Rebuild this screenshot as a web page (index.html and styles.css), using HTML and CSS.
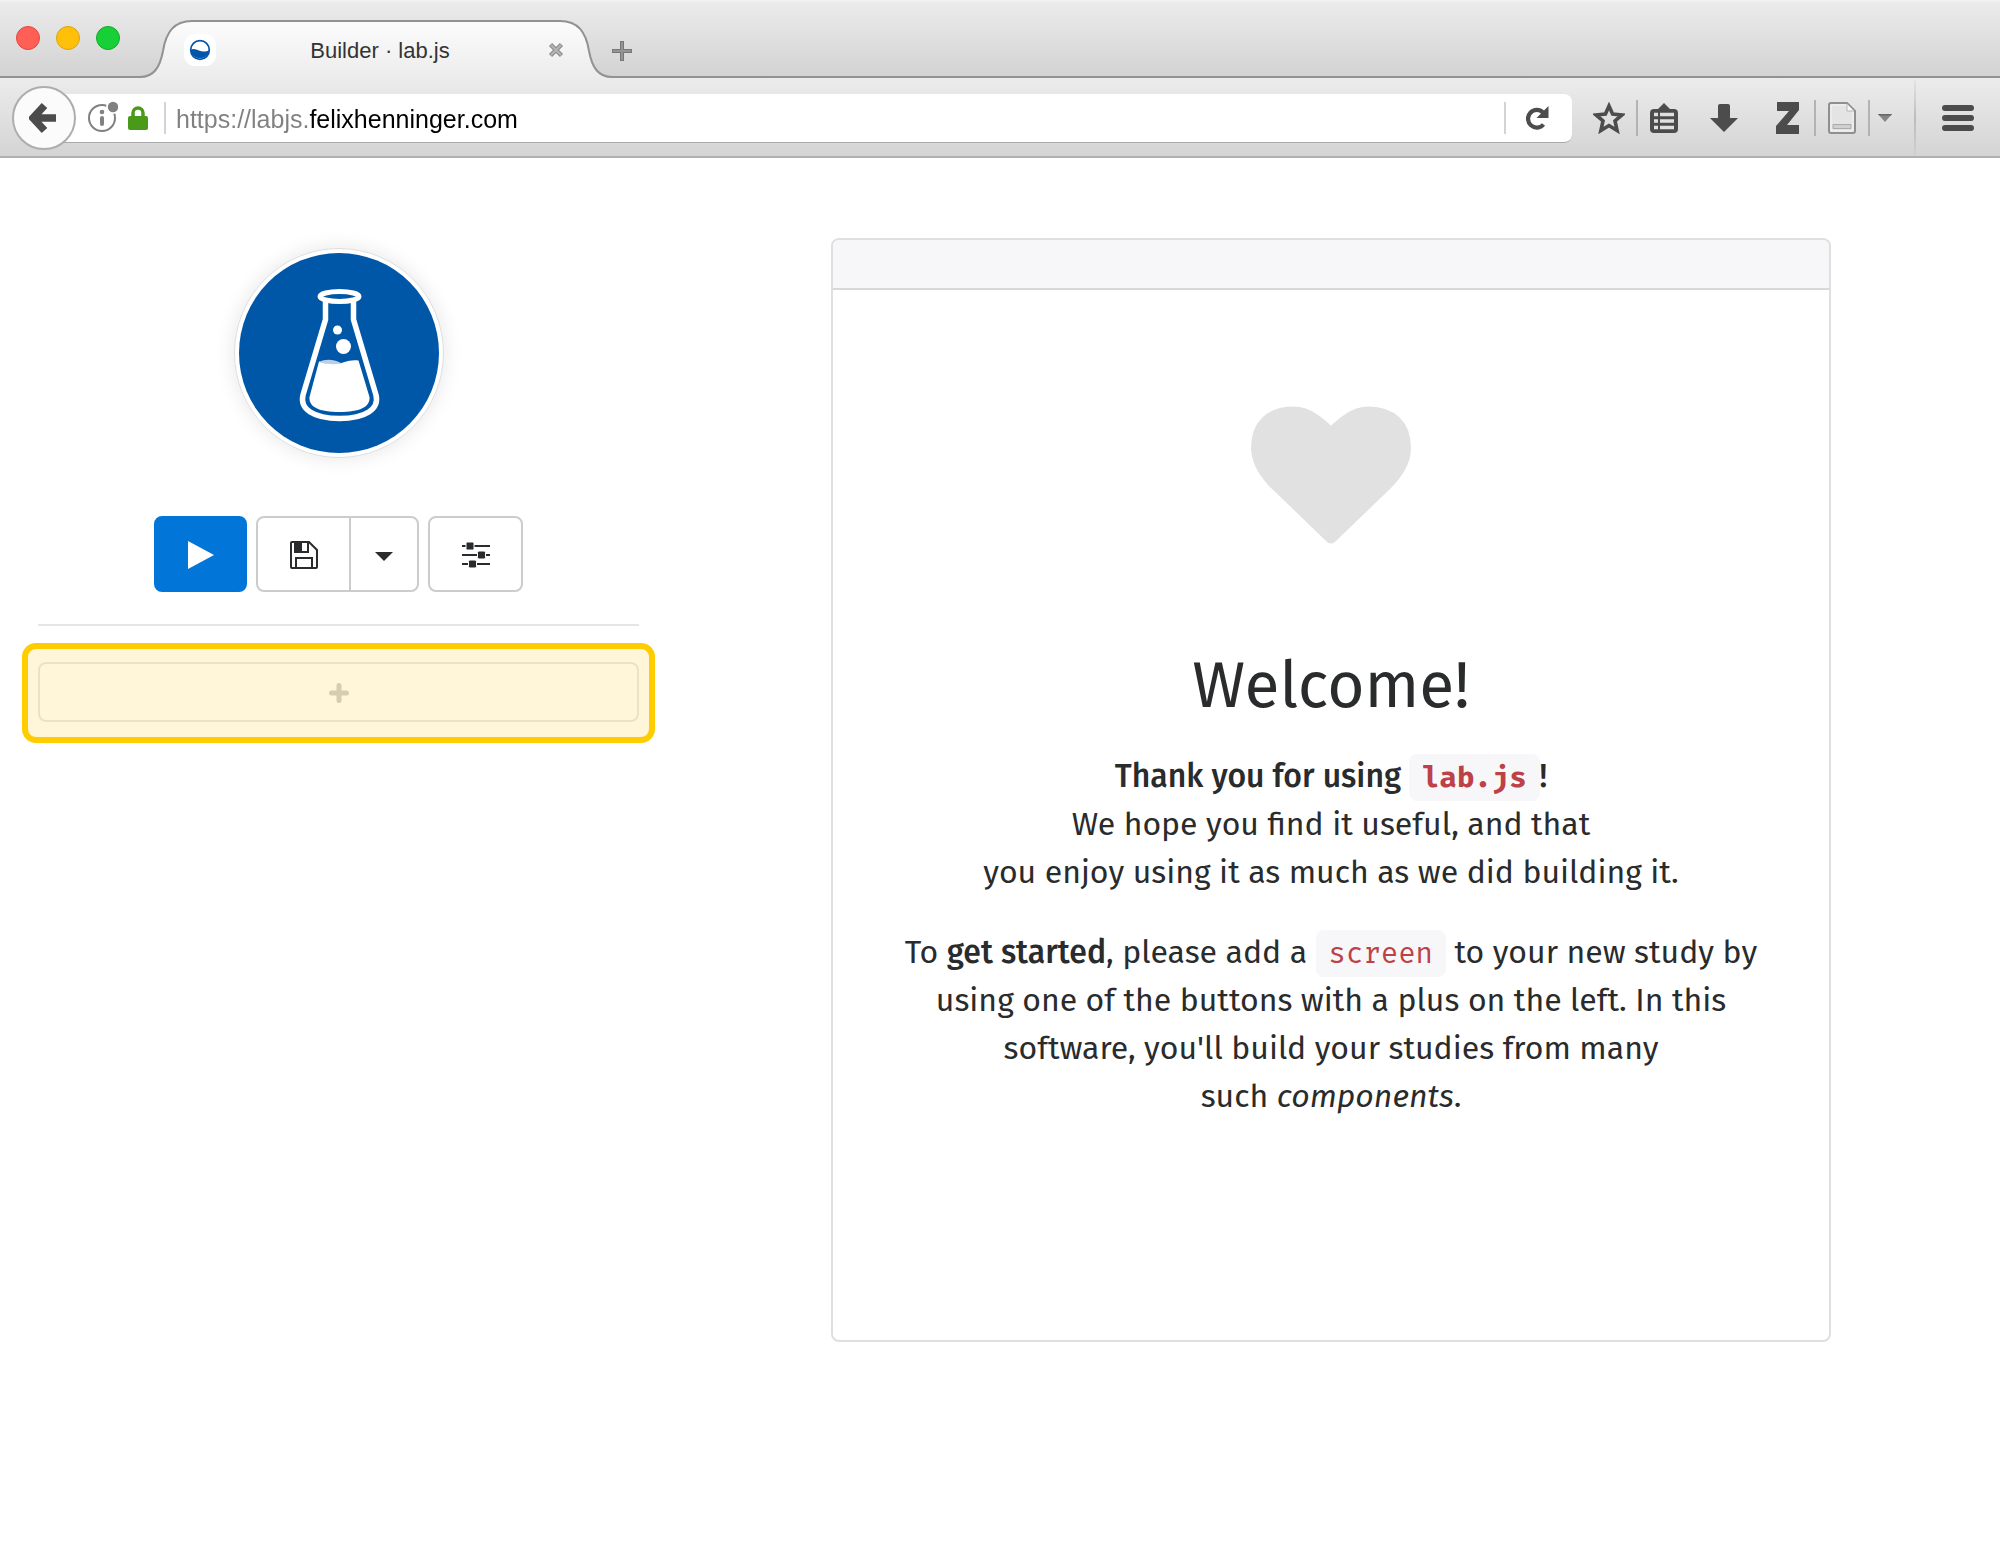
FILE: index.html
```html
<!DOCTYPE html>
<html lang="en">
<head>
<meta charset="utf-8">
<title>Builder · lab.js</title>
<link rel="stylesheet" href="styles.css">
</head>
<body>
<header class="browser">
  <div class="tabstrip">
    <div class="window-controls">
      <button class="light light-close" aria-label="Close window"></button>
      <button class="light light-minimize" aria-label="Minimize window"></button>
      <button class="light light-zoom" aria-label="Zoom window"></button>
    </div>
    <div class="tab">
      <svg class="tab-edge" width="52" height="58" viewBox="0 0 52 58" aria-hidden="true">
        <defs><linearGradient id="tabfill" x1="0" y1="0" x2="0" y2="1"><stop offset="0" stop-color="#fcfcfc"/><stop offset="1" stop-color="#ececec"/></linearGradient></defs>
        <path d="M0 57C14 57 20 47 23 31C26 12 34 1 52 1V58H0Z" fill="url(#tabfill)"/>
        <path d="M0 57C14 57 20 47 23 31C26 12 34 1 52 1" fill="none" stroke="#929292" stroke-width="2"/>
      </svg>
      <div class="tab-body">
        <svg class="favicon" width="32" height="32" viewBox="0 0 32 32" aria-hidden="true">
          <rect width="32" height="32" rx="11" fill="#fff"/>
          <circle cx="16" cy="16" r="9.300" fill="#fff" stroke="#0055a8" stroke-width="1.700"/>
          <path d="M6.500 16C9 14 12 15 15 16.500S22 18 25.500 16A9.600 9.600 0 0 1 6.500 16Z" fill="#0055a8"/>
        </svg>
        <span class="tab-title">Builder · lab.js</span>
        <button class="plain tab-close" aria-label="Close tab">
          <svg width="16" height="16" viewBox="0 0 16 16"><path d="M2.500 2.500l11 11M13.500 2.500l-11 11" stroke="#8e8e8e" stroke-width="4.500"/><path d="M3 3l10 10M13 3L3 13" stroke="#b5b5b5" stroke-width="2"/></svg>
        </button>
      </div>
      <svg class="tab-edge" width="52" height="58" viewBox="0 0 52 58" aria-hidden="true">
        <path d="M52 57C38 57 32 47 29 31C26 12 18 1 0 1V58H52Z" fill="url(#tabfill)"/>
        <path d="M52 57C38 57 32 47 29 31C26 12 18 1 0 1" fill="none" stroke="#929292" stroke-width="2"/>
      </svg>
    </div>
    <div class="tabstrip-rest">
      <button class="plain" aria-label="New tab">
        <svg width="20" height="20" viewBox="0 0 20 20"><path d="M10 0v20M0 10h20" stroke="#777" stroke-width="4"/><path d="M10 1v18M1 10h18" stroke="#949494" stroke-width="2"/></svg>
      </button>
    </div>
  </div>
  <div class="toolbar">
    <button class="back" aria-label="Back">
      <svg width="30" height="32" viewBox="0 0 30 32"><path d="M15.500 3.500L4 16l11.500 12.500M5 16h22" fill="none" stroke="#4c4c4c" stroke-width="7.500"/></svg>
    </button>
    <div class="urlbar">
      <svg class="info" width="30" height="32" viewBox="0 0 30 32" aria-hidden="true">
        <circle cx="14" cy="18" r="13" fill="none" stroke="#808080" stroke-width="2"/>
        <circle cx="25" cy="7" r="7" fill="#fff"/><circle cx="25" cy="7" r="5.200" fill="#808080"/>
        <circle cx="14" cy="12" r="2.300" fill="#808080"/><path d="M14 18v6" stroke="#808080" stroke-width="4" stroke-linecap="round"/>
      </svg>
      <svg class="lock" width="20" height="24" viewBox="0 0 20 24" aria-hidden="true">
        <path d="M5 12V7a5 5 0 0 1 10 0v5" fill="none" stroke="#489a18" stroke-width="3.500"/><rect y="10" width="20" height="14" rx="2" fill="#489a18"/>
      </svg>
      <span class="url-divider"></span>
      <input class="url" type="text" aria-label="Address" value="https://labjs.felixhenninger.com">
      <span class="url-divider"></span>
      <button class="plain reload" aria-label="Reload">
        <svg width="24" height="26" viewBox="0 0 24 26"><path d="M17 7.500A8.800 8.800 0 1 0 17.500 19.500" fill="none" stroke="#4c4c4c" stroke-width="4.200"/><path d="M22.500 1v12H10.500Z" fill="#4c4c4c"/></svg>
      </button>
    </div>
    <div class="tools">
      <button class="plain tool-star" aria-label="Bookmark">
        <svg width="32" height="32" viewBox="0 0 32 32"><path d="M16 4l3.600 8 9.400.9-7 6.100 2.100 9.500L16 23.500l-8.100 5L10 19l-7-6.100 9.400-.9Z" fill="none" stroke="#4c4c4c" stroke-width="3.600"/></svg>
      </button>
      <span class="tool-divider"></span>
      <button class="plain tool-list" aria-label="Bookmarks list">
        <svg width="28" height="30" viewBox="0 0 28 30"><path d="M14 0l6 6h4a4 4 0 0 1 4 4v16a4 4 0 0 1-4 4H4a4 4 0 0 1-4-4V10a4 4 0 0 1 4-4h4Z" fill="#4c4c4c"/><path d="M10 11.500h14M10 18h14M10 24.500h14" stroke="#e0e0e0" stroke-width="3.500"/><path d="M4 11.500h4M4 18h4M4 24.500h4" stroke="#e0e0e0" stroke-width="3.500"/></svg>
      </button>
      <button class="plain tool-download" aria-label="Downloads">
        <svg width="28" height="28" viewBox="0 0 28 28"><path d="M8 2a2 2 0 0 1 2-2h8a2 2 0 0 1 2 2v12h8L14 28 0 14h8Z" fill="#4c4c4c"/></svg>
      </button>
      <button class="plain tool-zotero" aria-label="Zotero">
        <svg width="24" height="32" viewBox="0 0 24 32"><path d="M1 0h22v8L11 23h12v9H0v-8L13 9H1Z" fill="#4c4c4c"/></svg>
      </button>
      <span class="tool-divider"></span>
      <button class="plain tool-page" aria-label="Save page">
        <svg width="28" height="32" viewBox="0 0 28 32"><path d="M3 1h16l8 8v20a2 2 0 0 1-2 2H3a2 2 0 0 1-2-2V3a2 2 0 0 1 2-2Z" fill="#e4e4e4" stroke="#8f8f8f" stroke-width="2"/><path d="M3 3h15.500l6.500 6.500V29H3Z" fill="none" stroke="#f4f4f4"/><path d="M19 2v7h7" fill="#f8f8f8" stroke="#b5b5b5"/><path d="M5 22.500h18v4H5Z" fill="#d0d0d0" stroke="#aaa"/></svg>
      </button>
      <span class="tool-divider"></span>
      <button class="plain tool-caret" aria-label="More save options">
        <svg width="14" height="8" viewBox="0 0 14 8"><path d="M0 0h14L7 8Z" fill="#858585"/><path d="M0 0h14l-1 1.500H1Z" fill="#666"/></svg>
      </button>
      <span class="menu-divider"></span>
      <button class="plain tool-menu" aria-label="Menu">
        <svg width="32" height="26" viewBox="0 0 32 26"><path d="M3 3h26M3 13h26M3 23h26" stroke="#4c4c4c" stroke-width="6" stroke-linecap="round"/></svg>
      </button>
    </div>
  </div>
</header>

<div class="page">
  <aside class="sidebar">
    <div class="logo">
      <svg width="200" height="200" viewBox="0 0 200 200" role="img" aria-label="lab.js">
        <circle cx="100" cy="100" r="100" fill="#0057a8"/>
        <g fill="none" stroke="#fff">
          <ellipse cx="100.500" cy="43.500" rx="19.500" ry="5" stroke-width="5"/>
          <path d="M86.500 48V66.500L64 142C60.500 156 74.500 165.500 100.500 165.500S140.500 156 137 142L114.500 66.500V48" stroke-width="5.500"/>
        </g>
        <circle cx="98.500" cy="77" r="4.500" fill="#fff"/><circle cx="104.500" cy="93.500" r="7.500" fill="#fff"/>
        <path d="M80 109C86 106 94 106 102 110L96 113Z" fill="#b8cfe6"/>
        <path d="M80 108.500C88 112 98 112 104 109.500C110 107.500 114 107 119.500 107.500L130.500 144C131.500 154 120.500 159 100.500 159S69.500 154 70.500 144Z" fill="#fff"/>
      </svg>
    </div>
    <div class="actions">
      <button class="btn btn-primary" aria-label="Run study">
        <svg width="26" height="28" viewBox="0 0 26 28"><path d="M0 0l26 14L0 28Z" fill="#fff"/></svg>
      </button>
      <div class="btn-group">
        <button class="btn" aria-label="Save">
          <svg width="28" height="28" viewBox="0 0 28 28"><path d="M1 2a1 1 0 0 1 1-1h17l8 8v17a1 1 0 0 1-1 1H2a1 1 0 0 1-1-1Z" fill="none" stroke="#292b2c" stroke-width="2"/><path d="M5 1v10h13V1M6 27V17h16v10" fill="none" stroke="#292b2c" stroke-width="2"/><path d="M5 1h7v10H5Z" fill="#292b2c"/></svg>
        </button>
        <button class="btn btn-caret" aria-label="More options">
          <svg width="18" height="9" viewBox="0 0 18 9"><path d="M0 0h18L9 9Z" fill="#292b2c"/></svg>
        </button>
      </div>
      <button class="btn" aria-label="Settings">
        <svg width="28" height="28" viewBox="0 0 28 28"><path d="M0 5h28M0 14h28M0 23h28" stroke="#292b2c" stroke-width="2"/><g fill="#292b2c" stroke="#fff" stroke-width="1"><rect x="4" y="1" width="8" height="8" rx="1.500"/><rect x="15.500" y="10" width="8" height="8" rx="1.500"/><rect x="6.500" y="19" width="8" height="8" rx="1.500"/></g></svg>
      </button>
    </div>
    <hr class="rule">
    <div class="highlight">
      <button class="add" aria-label="Add component">
        <svg width="20" height="20" viewBox="0 0 20 20"><path d="M10 2.500v15M2.500 10h15" stroke="#d6cdae" stroke-width="5" stroke-linecap="round"/></svg>
      </button>
    </div>
  </aside>
  <main class="content">
    <section class="card">
      <div class="card-header"></div>
      <div class="card-body">
        <svg class="heart" width="160" height="138" viewBox="0 128 1792 1536" aria-hidden="true"><path fill="#e1e1e1" d="M896 1664q-26 0-44-18l-624-602q-10-8-27.500-26T145 952.500 77 855 23.500 734 0 596q0-220 127-344t351-124q62 0 126.500 21.500t120 58T820 276t76 68q36-36 76-68t95.500-68.500 120-58T1314 128q224 0 351 124t127 344q0 221-229 450l-623 600q-18 18-44 18z"/></svg>
        <h1>Welcome!</h1>
        <p><strong>Thank you for using <code>lab.js</code>!</strong><br>We hope you find it useful, and that<br>you enjoy using it as much as we did building it.</p>
        <p>To <strong>get started</strong>, please add a <code>screen</code> to your new study by<br>using one of the buttons with a plus on the left. In this<br>software, you'll build your studies from many<br>such <em>components</em>.</p>
      </div>
    </section>
  </main>
</div>
</body>
</html>
```
FILE: styles.css
```css
* { box-sizing: border-box; }

body {
  margin: 0;
  background: #fff;
  color: #292b2c;
  font-family: "Fira Sans", "Noto Sans", sans-serif;
}

svg { display: block; flex: none; }

button { cursor: pointer; }

.plain {
  display: flex;
  padding: 0;
  border: 0;
  background: none;
}

/* Browser window */
.browser { font-family: "Helvetica Neue", "Liberation Sans", Arial, sans-serif; }

.tabstrip {
  display: flex;
  align-items: stretch;
  height: 78px;
  background: linear-gradient(#f4f4f4, #ebebeb 3px, #d2d2d2);
}

.window-controls {
  display: flex;
  gap: 16px;
  width: 140px;
  padding: 26px 0 0 16px;
  border-bottom: 2px solid #929292;
}

.light {
  width: 24px;
  height: 24px;
  padding: 0;
  border: 1px solid;
  border-radius: 50%;
}

.light-close { background: #ff5f55; border-color: #e2463f; }
.light-minimize { background: #ffc00a; border-color: #dfa010; }
.light-zoom { background: #17cf36; border-color: #12ab29; }

.tab {
  display: flex;
  align-items: flex-end;
  width: 472px;
}

.tab-body {
  display: flex;
  flex: 1;
  align-items: center;
  height: 58px;
  border-top: 2px solid #929292;
  background: linear-gradient(#fcfcfc, #ececec);
}

.favicon { margin-left: -8px; }

.tab-title {
  flex: 1;
  padding: 2px 4px 0 0;
  color: #333;
  font-size: 22px;
  text-align: center;
}

.tab-close {
  z-index: 1;
  margin-right: -4px;
}

.tabstrip-rest {
  display: flex;
  flex: 1;
  align-items: flex-start;
  padding-top: 41px;
  border-bottom: 2px solid #929292;
}

.toolbar {
  display: flex;
  align-items: center;
  height: 80px;
  padding: 2px 0 0 12px;
  border-bottom: 2px solid #b0b0b0;
  background: linear-gradient(#ececec, #d4d4d4);
}

.back {
  z-index: 1;
  display: flex;
  align-items: center;
  justify-content: center;
  width: 64px;
  height: 64px;
  padding: 0;
  border: 2px solid #adadad;
  border-radius: 50%;
  background: #fbfbfb;
}

.urlbar {
  display: flex;
  flex: 1;
  align-items: center;
  height: 49px;
  margin-left: -16px;
  padding: 0 22px 0 28px;
  border-bottom: 1px solid #aaa;
  border-radius: 0 8px 8px 0;
  background: #fff;
}

.info { margin-bottom: 4px; }
.lock { margin: 0 16px 0 10px; }

.url-divider {
  width: 2px;
  height: 32px;
  background: #d3d3d3;
}

/* The scheme and subdomain are dimmed, the registered domain is black. */
.url {
  flex: 1;
  min-width: 0;
  height: 40px;
  padding: 4px 0 0 10px;
  border: 0;
  background: linear-gradient(90deg, #808080 143px, #000 143px);
  background-clip: text;
  -webkit-background-clip: text;
  color: transparent;
  font: 25px "Helvetica Neue", "Liberation Sans", Arial, sans-serif;
}

.reload { margin-left: 20px; }

.tools {
  display: flex;
  align-items: center;
  height: 76px;
  padding-left: 21px;
}

.tool-divider {
  width: 2px;
  height: 36px;
  background: #b3b3b3;
}

.tool-star { margin-right: 11px; }
.tool-list { margin: 0 32px 0 12px; }
.tool-download { margin-right: 38px; }
.tool-zotero { margin-right: 14px; }
.tool-page { margin: 0 12px; }
.tool-caret { margin: 0 22px 0 8px; }
.tool-menu { margin: 0 26px; }

.menu-divider {
  align-self: stretch;
  width: 2px;
  background: linear-gradient(#e4e4e4, #bcbcbc, #cfcfcf);
}

/* Builder */
.page {
  display: flex;
  align-items: flex-start;
}

.sidebar {
  width: 33.1%;
  padding: 90px 23px 0 38px;
}

.logo {
  width: 210px;
  margin: 0 auto;
  padding: 4px;
  border: 1px solid #ddd;
  border-radius: 50%;
  box-shadow: 0 0 20px rgba(0, 0, 0, 0.1);
}

.actions {
  display: flex;
  justify-content: center;
  gap: 9px;
  margin-top: 58px;
}

.btn {
  display: flex;
  align-items: center;
  justify-content: center;
  width: 95px;
  height: 76px;
  padding: 2px 0 0;
  border: 2px solid #ccc;
  border-radius: 8px;
  background: #fff;
}

.btn-primary {
  width: 93px;
  border-color: #0275d8;
  background: #0275d8;
}

.btn-group { display: flex; }
.btn-group .btn:first-child { border-radius: 8px 0 0 8px; }

.btn-group .btn-caret {
  width: 70px;
  margin-left: -2px;
  padding-top: 4px;
  border-radius: 0 8px 8px 0;
}

.rule {
  height: 2px;
  margin: 32px 0 17px;
  border: 0;
  background: #e5e5e5;
}

.highlight {
  margin: 0 -16px;
  padding: 13px 10px 15px;
  border: 6px solid #fc0;
  border-radius: 14px;
  background: #fff5d9;
}

.add {
  display: flex;
  align-items: center;
  justify-content: center;
  width: 100%;
  height: 60px;
  padding: 2px 0 0;
  border: 2px solid #ebe1c3;
  border-radius: 8px;
  background: none;
}

.content {
  flex: 1;
  padding: 80px 0;
}

.card {
  max-width: 1000px;
  margin: 0 auto;
  border: 2px solid #dfdfdf;
  border-radius: 8px;
}

.card-header {
  height: 50px;
  border-bottom: 2px solid #d8d8da;
  border-radius: 6px 6px 0 0;
  background: #f7f7f9;
}

.card-body {
  padding: 116px 48px 188px;
  text-align: center;
}

.heart { margin: 0 auto; }

h1 {
  margin: 106px 0 30px;
  font-size: 64px;
  font-weight: 400;
  line-height: 72px;
}

p {
  margin: 0 0 32px;
  font-size: 32px;
  line-height: 48px;
}

strong { font-weight: 500; }

code {
  padding: 6px 13px;
  border-radius: 8px;
  background: #f7f7f9;
  color: #bd4147;
  font-family: "Fira Mono", "DejaVu Sans Mono", monospace;
  font-size: 29px;
  line-height: 1;
}

strong code { font-weight: 700; }
```
